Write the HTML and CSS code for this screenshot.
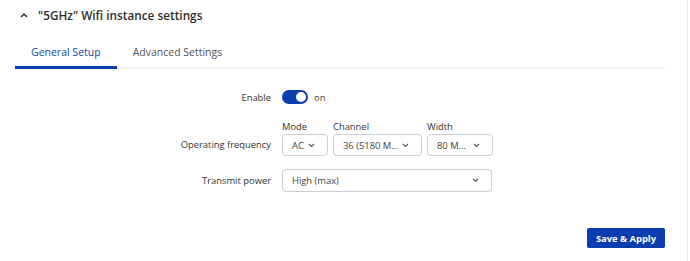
FILE: index.html
```html
<!DOCTYPE html>
<html lang="en">
<head>
    <meta charset="UTF-8">
    <title>5GHz Wifi instance settings</title>
    <link rel="stylesheet" href="styles.css">
</head>
<body>
    <div class="panel">
        <div class="section-header">
            <svg class="caret" width="8" height="6" viewBox="0 0 8 6"><path d="M1 5 L4 2 L7 5" fill="none" stroke="#333" stroke-width="1.5"/></svg>
            <span>"5GHz" Wifi instance settings</span>
        </div>

        <div class="tabs">
            <div class="tab active">General Setup</div>
            <div class="tab">Advanced Settings</div>
        </div>

        <div class="form">
            <div class="form-row enable-row">
                <label class="form-label">Enable</label>
                <div class="form-control">
                    <span class="switch"><span class="knob"></span></span>
                    <span class="switch-text">on</span>
                </div>
            </div>

            <div class="form-row freq-row">
                <label class="form-label">Operating frequency</label>
                <div class="form-control multi">
                    <div class="field">
                        <span class="field-label">Mode</span>
                        <div class="select w-mode"><span>AC</span><svg class="chev" width="7" height="5" viewBox="0 0 7 5"><path d="M1 1 L3.5 3.5 L6 1" fill="none" stroke="#555" stroke-width="1.2"/></svg></div>
                    </div>
                    <div class="field">
                        <span class="field-label">Channel</span>
                        <div class="select w-channel"><span>36 (5180 M...</span><svg class="chev" width="7" height="5" viewBox="0 0 7 5"><path d="M1 1 L3.5 3.5 L6 1" fill="none" stroke="#555" stroke-width="1.2"/></svg></div>
                    </div>
                    <div class="field">
                        <span class="field-label">Width</span>
                        <div class="select w-width"><span>80 M...</span><svg class="chev" width="7" height="5" viewBox="0 0 7 5"><path d="M1 1 L3.5 3.5 L6 1" fill="none" stroke="#555" stroke-width="1.2"/></svg></div>
                    </div>
                </div>
            </div>

            <div class="form-row power-row">
                <label class="form-label">Transmit power</label>
                <div class="form-control">
                    <div class="select w-full"><span>High (max)</span><svg class="chev" width="7" height="5" viewBox="0 0 7 5"><path d="M1 1 L3.5 3.5 L6 1" fill="none" stroke="#555" stroke-width="1.2"/></svg></div>
                </div>
            </div>
        </div>

        <div class="actions">
            <button class="btn-primary">Save &amp; Apply</button>
        </div>
    </div>
</body>
</html>
```

FILE: styles.css
```css
body {
    margin: 0;
    background: #fff;
    font-family: "Open Sans", "Noto Sans", Arial, sans-serif;
    color: #333;
}

.panel {
    width: 688px;
    height: 261px;
    border-right: 1px solid #e6e8ee;
    box-sizing: border-box;
    padding: 0 22px 0 15px;
}

.section-header {
    display: flex;
    align-items: center;
    height: 30px;
    padding-left: 5px;
    font-size: 11.8px;
    font-weight: 600;
    color: #2e2e2e;
}

.caret {
    margin-right: 10px;
}

.tabs {
    display: flex;
    margin-top: 8px;
    border-bottom: 2px solid #eef0f5;
}

.tab {
    padding: 7px 16px 7px;
    font-size: 10.5px;
    color: #555;
    margin-bottom: -2px;
    border-bottom: 3px solid transparent;
}

.tab.active {
    color: #1346a8;
    border-bottom-color: #0b3cb0;
}

.form {
    padding-top: 20px;
}

.form-row {
    display: flex;
    align-items: center;
}

.form-label {
    width: 256px;
    text-align: right;
    padding-right: 11px;
    font-size: 9.4px;
    color: #333;
}

.form-control {
    display: flex;
    align-items: center;
}

.enable-row {
    height: 16px;
}

.switch {
    position: relative;
    width: 26px;
    height: 14px;
    border-radius: 7px;
    background: #0b3cb0;
}

.knob {
    position: absolute;
    right: 2px;
    top: 2px;
    width: 10px;
    height: 10px;
    border-radius: 50%;
    background: #fff;
}

.switch-text {
    margin-left: 6px;
    font-size: 9.4px;
    color: #444;
}

.freq-row {
    margin-top: 16px;
    align-items: flex-end;
}

.freq-row .form-label {
    line-height: 22px;
}

.multi {
    gap: 5px;
    align-items: flex-end;
}

.field {
    display: flex;
    flex-direction: column;
}

.field-label {
    font-size: 9.4px;
    color: #333;
    line-height: 12px;
    margin-bottom: 1px;
}

.select {
    display: flex;
    align-items: center;
    justify-content: space-between;
    height: 22px;
    box-sizing: border-box;
    border: 1px solid #c9cdd6;
    border-radius: 4px;
    padding: 0 12px 0 9px;
    font-size: 9.4px;
    color: #444;
    background: #fff;
    white-space: nowrap;
}

.w-mode {
    width: 46px;
}

.w-channel {
    width: 89px;
}

.w-width {
    width: 66px;
}

.w-full {
    width: 210px;
    height: 23px;
}

.power-row {
    margin-top: 13px;
}

.actions {
    display: flex;
    justify-content: flex-end;
    margin-top: 36px;
}

.btn-primary {
    height: 20px;
    width: 78px;
    padding: 0;
    border: none;
    border-radius: 2px;
    background: #0b3cb0;
    color: #fff;
    font-family: "Open Sans", "Noto Sans", Arial, sans-serif;
    font-size: 9.4px;
    font-weight: 700;
}
```
